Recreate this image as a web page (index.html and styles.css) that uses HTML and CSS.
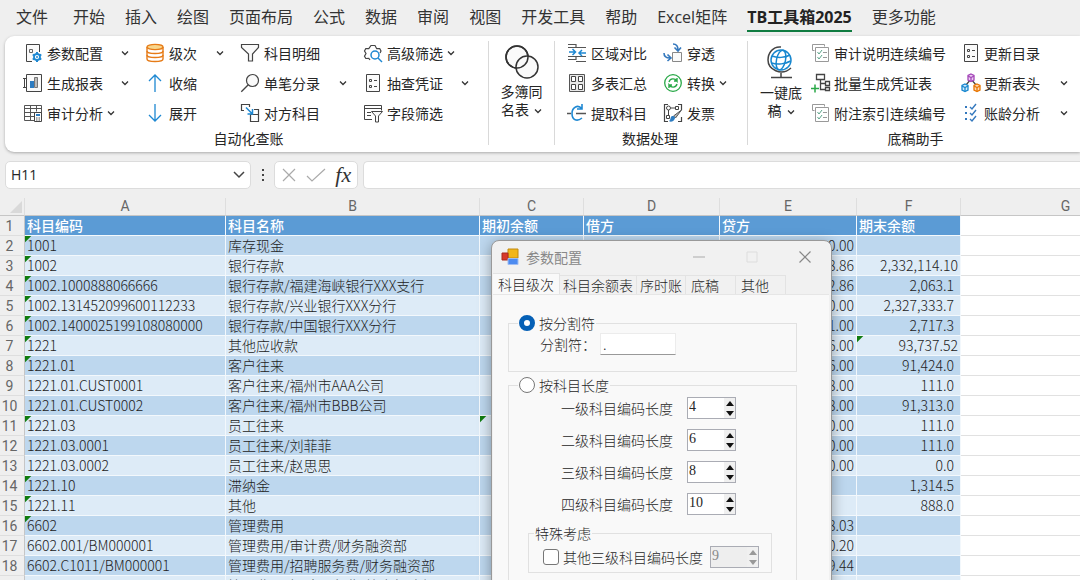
FILE: index.html
```
<!DOCTYPE html>
<html lang="zh-CN">
<head>
<meta charset="utf-8">
<title>TB工具箱2025</title>
<link rel="stylesheet" href="styles.css">
</head>
<body>
<svg class="defs" aria-hidden="true">
  <symbol id="chev" viewBox="0 0 8 8"><path d="M1 2.500 4 5.500 7 2.500" fill="none" stroke="#333" stroke-width="1.300"/></symbol>
  <symbol id="checklist" viewBox="0 0 20 20"><g fill="none" stroke="#999"><path d="M3.500 7.500h-2v-6h12v2"/><path d="M4.500 4.500h13v14h-13z" fill="#fff"/><path d="M12 9.500h4M12 14.500h4"/><path d="m6.500 9 1.500 2 3-4M6.500 14l1.500 2 3-4" stroke="#5ba58a"/></g></symbol>
  <symbol id="sheet" viewBox="0 0 20 20"><g fill="#fafafa" stroke="#444"><path d="M3.500 1.500h13v17h-13z"/><path d="M6.500 6.500h2v2h-2zM6.500 12.500h2v2h-2z"/><path d="M11 7.500h3M11 13.500h3"/></g></symbol>
</svg>
<div class="app">
  <nav class="menu">
    <a class="menu-item file" href="#">文件</a><a class="menu-item" href="#">开始</a><a class="menu-item" href="#">插入</a><a class="menu-item" href="#">绘图</a><a class="menu-item" href="#">页面布局</a><a class="menu-item" href="#">公式</a><a class="menu-item" href="#">数据</a><a class="menu-item" href="#">审阅</a><a class="menu-item" href="#">视图</a><a class="menu-item" href="#">开发工具</a><a class="menu-item" href="#">帮助</a><a class="menu-item" href="#">Excel矩阵</a><a class="menu-item active" href="#">TB工具箱2025</a><a class="menu-item" href="#">更多功能</a>
  </nav>

  <section class="ribbon">
    <div class="group audit">
      <div class="tools">
        <button class="tool"><svg class="icon" viewBox="0 0 20 20"><path d="M9 18.500H3.500v-17h13V9" fill="#fafafa" stroke="#444"/><path d="M6.500 6.500h3v3h-3z" fill="none" stroke="#666"/><circle cx="14" cy="14" r="3" fill="#fff" stroke="#1e88d2" stroke-width="1.800"/><path d="M14 9v2M14 17v2M9.700 11.500l1.700 1M16.600 15.500l1.700 1M9.700 16.500l1.700-1M16.600 12.500l1.700-1" stroke="#1e88d2" stroke-width="2"/><circle cx="14" cy="14" r="1" fill="#1e88d2"/></svg>参数配置<svg class="chev far"><use href="#chev"/></svg></button>
        <button class="tool"><svg class="icon" viewBox="0 0 20 20"><path d="M2 4v12c0 3.300 16 3.300 16 0V4" fill="#fff" stroke="#e67b17" stroke-width="1.400"/><path d="M2 8c0 3.300 16 3.300 16 0M2 12c0 3.300 16 3.300 16 0" fill="none" stroke="#e67b17" stroke-width="1.400"/><ellipse cx="10" cy="4" rx="8" ry="2.600" fill="#f8d68c" stroke="#e67b17" stroke-width="1.400"/></svg>级次<svg class="chev far"><use href="#chev"/></svg></button>
        <button class="tool"><svg class="icon" viewBox="0 0 20 20"><path d="M1.500 1.500h17v3l-6 6.500v7h-4v-7l-7-6.500z" fill="#fafafa" stroke="#444" stroke-width="1.200"/></svg>科目明细</button>
        <button class="tool"><svg class="icon" viewBox="0 0 20 20"><path d="M7 17 5.800 15.300l-3 .2-1.300-2.300L3 10.500 1.500 8l1.300-2.500 3 .2L8 2.500h4l1.700 3.200 3-.2L18 8l-1 2" fill="none" stroke="#444" stroke-width="1.200"/><circle cx="12" cy="12" r="4" fill="#fff" stroke="#1e88d2" stroke-width="1.500"/><path d="m15 15 4 4" stroke="#1e88d2" stroke-width="1.500"/></svg>高级筛选<svg class="chev"><use href="#chev"/></svg></button>

        <button class="tool"><svg class="icon" viewBox="0 0 20 20"><path d="M3.500 1.500h15v17h-15z" fill="#fafafa" stroke="#444"/><path d="M1.500 5v10M0 5.500h3M0 14.500h3" stroke="#444"/><path d="M7 8h4v7H7z" fill="#2d7cc1"/><path d="M11.500 4.500h3v10h-3z" fill="#bbb" stroke="#777"/></svg>生成报表<svg class="chev far"><use href="#chev"/></svg></button>
        <button class="tool"><svg class="icon" viewBox="0 0 20 20"><path d="M10 19V1.500M4 8l6-6 6 6" fill="none" stroke="#1e88d2" stroke-width="1.300"/></svg>收缩</button>
        <button class="tool"><svg class="icon" viewBox="0 0 20 20"><circle cx="12.500" cy="7.500" r="6" fill="#fafafa" stroke="#444" stroke-width="1.200"/><path d="m8.300 11.800-7 7" stroke="#444" stroke-width="1.300"/></svg>单笔分录<svg class="chev far"><use href="#chev"/></svg></button>
        <button class="tool"><svg class="icon"><use href="#sheet"/></svg>抽查凭证<svg class="chev far"><use href="#chev"/></svg></button>

        <button class="tool"><svg class="icon" viewBox="0 0 20 20"><path d="M1.500 2.500h17v15h-17zM1.500 5.500h17M1.500 9.500h17M1.500 13.500h10M7.500 2.500v15M13.500 2.500v6" fill="none" stroke="#555"/><path d="M11.500 9.500h7v9h-7z" fill="#fff" stroke="#444"/><path d="M13 11h4v2h-4z" fill="#2d7cc1"/><path d="M13 15h1.500M15.500 15H17M13 17h1.500M15.500 17H17" stroke="#555"/></svg>审计分析<svg class="chev"><use href="#chev"/></svg></button>
        <button class="tool"><svg class="icon" viewBox="0 0 20 20"><path d="M10 1v17.500M4 12l6 6 6-6" fill="none" stroke="#1e88d2" stroke-width="1.300"/></svg>展开</button>
        <button class="tool"><svg class="icon" viewBox="0 0 20 20"><path d="M4 7.500H1.500v-6h8V4M14 6.500h4.500v5M10.500 11.500h8v7h-8z" fill="none" stroke="#444" stroke-width="1.200"/><path d="m6 4.500 6 6M12.500 6v5H7.500" fill="none" stroke="#1e88d2" stroke-width="1.500"/></svg>对方科目</button>
        <button class="tool"><svg class="icon" viewBox="0 0 20 20"><path d="M9 16.500H1.500v-14h17v5M1.500 5.500h17M4 9.500h4M4 12.500h4" fill="none" stroke="#444"/><path d="M8.500 8.500h11l-4 4.500v6h-3v-6z" fill="#fafafa" stroke="#444"/></svg>字段筛选</button>
      </div>
      <div class="caption">自动化查账</div>
    </div>

    <div class="group books">
      <button class="big"><svg class="big-icon" viewBox="0 0 36 36"><circle cx="13" cy="13" r="11" fill="#fafafa" stroke="#333" stroke-width="1.500"/><circle cx="23" cy="23" r="11" fill="#fafafa" stroke="#333" stroke-width="1.500"/><circle cx="13" cy="13" r="11" fill="none" stroke="#333" stroke-width="1.500"/></svg><span>多簿同</span><span>名表<svg class="chev"><use href="#chev"/></svg></span></button>
    </div>

    <div class="group data">
      <div class="tools">
        <button class="tool"><svg class="icon" viewBox="0 0 20 20"><path d="M1 1.500h8v3h10M1 4.500h8M1 16.500h8v-3h10M9 18.500h10M1 13.500h8" fill="none" stroke="#555" stroke-width="1.200"/><path d="M2 9h6M5.500 6l3 3-3 3M19 10h-6M15 7l-3 3 3 3" fill="none" stroke="#1e88d2" stroke-width="1.500"/></svg>区域对比</button>
        <button class="tool"><svg class="icon" viewBox="0 0 20 20"><path d="M9.500 9.500h9v9h-9z" fill="#fafafa" stroke="#888"/><path d="M10 1c4 0 5 2 5 6M11.500 4.500 15 8l3-3.500M1 10c0 4 2 5 6 5M4.500 11.500 8 15l-3.500 3" fill="none" stroke="#3478bd" stroke-width="1.600"/></svg>穿透</button>
        <button class="tool"><svg class="icon" viewBox="0 0 20 20"><path d="M2.500 1.500h15v17h-15z" fill="#e8e8e8" stroke="#555"/><path d="M4.500 3.500h4v5h-4zM11.500 3.500h4v5h-4zM4.500 11.500h4v5h-4zM11.500 11.500h4v5h-4z" fill="#fff" stroke="#444"/></svg>多表汇总</button>
        <button class="tool"><svg class="icon" viewBox="0 0 20 20"><circle cx="10" cy="10" r="8.300" fill="#fff" stroke="#29a847" stroke-width="1.300"/><path d="M6 9c1-4 6-4 8-1V5M14 8h-3M14 11c-1 4-6 4-8 1v3M6 12h3" fill="none" stroke="#29a847" stroke-width="1.400"/></svg>转换<svg class="chev"><use href="#chev"/></svg></button>
        <button class="tool"><svg class="icon" viewBox="0 0 20 20"><path d="M0 10.500h4M9 10.500h10" stroke="#555" stroke-width="1.300"/><path d="M15 1v5h-5M15 6C11 1 5 4 5 10.500S10 19 15 15" fill="none" stroke="#1e88d2" stroke-width="1.600"/></svg>提取科目</button>
        <button class="tool"><svg class="icon" viewBox="0 0 20 20"><path d="M5 1.500H1.500v17H5M15 1.500h3.500V7M18.500 14v4.500H15" fill="none" stroke="#444" stroke-width="1.200"/><circle cx="5.500" cy="5" r="2" fill="none" stroke="#444"/><path d="M8 5h4M12.500 3.500h3v3h-3zM5.500 7v5M3.500 12.500h3v3h-3z" fill="none" stroke="#444"/><path d="m18.500 7-6 8-2-2z" fill="#bbb" stroke="#555"/><path d="M9 13c3 0 4 2 2 4-1 2-4 2-5 1 2-1 1-4 3-5z" fill="#2d7cc1"/></svg>发票</button>
      </div>
      <div class="caption">数据处理</div>
    </div>

    <div class="group draft">
      <button class="big"><svg class="big-icon" viewBox="0 0 36 36"><circle cx="18" cy="15" r="10" fill="#fff" stroke="#1787cf" stroke-width="1.500"/><ellipse cx="18" cy="15" rx="4.500" ry="10" fill="none" stroke="#1787cf" stroke-width="1.500" transform="rotate(12 18 15)"/><path d="M9 11c5 2 13 2 18-1M8.500 18c6 2 14 1 19-2" fill="none" stroke="#1787cf" stroke-width="1.500"/><path d="M18 2C10 1 5 8 5 15c0 9 13 17 23 8M18 28v4M8 32.500h21" fill="none" stroke="#444" stroke-width="1.500"/></svg><span>一键底</span><span>稿<svg class="chev"><use href="#chev"/></svg></span></button>
      <div class="draft-main">
        <div class="tools">
          <button class="tool"><svg class="icon"><use href="#checklist"/></svg>审计说明连续编号</button>
          <button class="tool"><svg class="icon"><use href="#sheet"/></svg>更新目录</button>
          <button class="tool"><svg class="icon" viewBox="0 0 20 20"><path d="M5.500 1.500h8v5h-8zM9.500 6.500v10H14M9.500 10.500H14M14.500 8.500h4v4h-4zM14.500 14.500h4v3h-4z" fill="none" stroke="#444" stroke-width="1.300"/><path d="M0 15.500h8M4 11.500v8" stroke="#29a847" stroke-width="1.500"/></svg>批量生成凭证表</button>
          <button class="tool"><svg class="icon" viewBox="0 0 20 20"><path d="m5 12 5-6 5 6" fill="none" stroke="#444" stroke-width="1.200"/><g stroke-width="1.300"><path d="m10 1 3 1.500V7l-3 1.500L7 7V2.500z" fill="#ecd0f2" stroke="#a445b8"/><path d="m7 3 3 1.500L13 3M10 4.500V8" fill="none" stroke="#a445b8"/><path d="m4 11 3 1.500V17l-3 1.500L1 17v-4.500z" fill="#d5ebfa" stroke="#1787cf"/><path d="m1 13 3 1.500L7 13M4 14.500V18" fill="none" stroke="#1787cf"/><path d="m16 11 3 1.500V17l-3 1.500-3-1.500v-4.500z" fill="#fbdcb8" stroke="#e87500"/><path d="m13 13 3 1.500 3-1.500M16 14.500V18" fill="none" stroke="#e87500"/></g></svg>更新表头<svg class="chev far"><use href="#chev"/></svg></button>
          <button class="tool"><svg class="icon"><use href="#checklist"/></svg>附注索引连续编号</button>
          <button class="tool"><svg class="icon" viewBox="0 0 20 20"><path d="M4 3h2v2H4zM4 9h2v2H4zM4 15h2v2H4z" fill="#3478bd"/><path d="m9 4 2 2 4-5M9 10l2 2 4-5M9 16l2 2 4-5" fill="none" stroke="#3478bd" stroke-width="1.400"/></svg>账龄分析<svg class="chev far"><use href="#chev"/></svg></button>
        </div>
        <div class="caption">底稿助手</div>
      </div>
    </div>
  </section>

  <div class="formula-bar">
    <div class="box name-box"><input class="name-input" aria-label="名称框" value="H11"><svg class="name-chev" viewBox="0 0 14 10"><path d="m2 2 5 5 5-5" fill="none" stroke="#444" stroke-width="1.500"/></svg></div>
    <svg class="dots" viewBox="0 0 4 14"><path d="M1 1h2v2H1zM1 6h2v2H1zM1 11h2v2H1z" fill="#444"/></svg>
    <div class="box fx-box">
      <button class="fx-btn" aria-label="取消"><svg viewBox="0 0 20 16"><path d="m4 2 12 12M16 2 4 14" stroke="#aaa" stroke-width="1.200"/></svg></button>
      <button class="fx-btn" aria-label="输入"><svg viewBox="0 0 20 16"><path d="m1 9 5 5L19 2" fill="none" stroke="#aaa" stroke-width="1.200"/></svg></button>
      <button class="fx-btn fx">fx</button>
    </div>
    <input class="box formula" aria-label="编辑栏">
  </div>

  <div class="grid-wrap">
    <table class="grid">
      <colgroup><col class="c0"><col class="ca"><col class="cb"><col class="cc"><col class="cd"><col class="ce"><col class="cf"><col class="cg"></colgroup>
      <thead><tr><th class="corner"><svg viewBox="0 0 12 12"><path d="M12 0v12H0z" fill="#d9d9d9"/></svg></th><th>A</th><th>B</th><th>C</th><th>D</th><th>E</th><th>F</th><th>G</th></tr></thead>
      <tbody>
        <tr class="title"><th>1</th><td>科目编码</td><td>科目名称</td><td>期初余额</td><td>借方</td><td>贷方</td><td>期末余额</td><td></td></tr>
        <tr><th>2</th><td class="flag">1001</td><td>库存现金</td><td></td><td></td><td>0.00</td><td></td><td></td></tr>
        <tr><th>3</th><td class="flag">1002</td><td>银行存款</td><td></td><td></td><td>8.86</td><td>2,332,114.10</td><td></td></tr>
        <tr><th>4</th><td class="flag">1002.1000888066666</td><td>银行存款/福建海峡银行XXX支行</td><td></td><td></td><td>2.86</td><td class="short">2,063.1</td><td></td></tr>
        <tr><th>5</th><td class="flag">1002.131452099600112233</td><td>银行存款/兴业银行XXX分行</td><td></td><td></td><td>0.00</td><td class="short">2,327,333.7</td><td></td></tr>
        <tr><th>6</th><td class="flag">1002.1400025199108080000</td><td>银行存款/中国银行XXX分行</td><td></td><td></td><td>1.00</td><td class="short">2,717.3</td><td></td></tr>
        <tr><th>7</th><td class="flag">1221</td><td>其他应收款</td><td></td><td></td><td>6.00</td><td class="flag">93,737.52</td><td></td></tr>
        <tr><th>8</th><td class="flag">1221.01</td><td>客户往来</td><td></td><td></td><td>6.00</td><td class="short">91,424.0</td><td></td></tr>
        <tr><th>9</th><td>1221.01.CUST0001</td><td>客户往来/福州市AAA公司</td><td></td><td></td><td>8.00</td><td class="short">111.0</td><td></td></tr>
        <tr><th>10</th><td>1221.01.CUST0002</td><td>客户往来/福州市BBB公司</td><td></td><td></td><td>8.00</td><td class="short">91,313.0</td><td></td></tr>
        <tr><th>11</th><td class="flag">1221.03</td><td>员工往来</td><td class="flag"></td><td></td><td>0.00</td><td class="short">111.0</td><td></td></tr>
        <tr><th>12</th><td>1221.03.0001</td><td>员工往来/刘菲菲</td><td></td><td></td><td>0.00</td><td class="short">111.0</td><td></td></tr>
        <tr><th>13</th><td>1221.03.0002</td><td>员工往来/赵思思</td><td></td><td></td><td>0.00</td><td class="short">0.0</td><td></td></tr>
        <tr><th>14</th><td class="flag">1221.10</td><td>滞纳金</td><td></td><td></td><td></td><td class="short">1,314.5</td><td></td></tr>
        <tr><th>15</th><td class="flag">1221.11</td><td>其他</td><td></td><td></td><td></td><td class="short">888.0</td><td></td></tr>
        <tr><th>16</th><td class="flag">6602</td><td>管理费用</td><td></td><td></td><td>8.03</td><td></td><td></td></tr>
        <tr><th>17</th><td>6602.001/BM000001</td><td>管理费用/审计费/财务融资部</td><td></td><td></td><td>0.20</td><td></td><td></td></tr>
        <tr><th>18</th><td>6602.C1011/BM000001</td><td>管理费用/招聘服务费/财务融资部</td><td></td><td></td><td>9.44</td><td></td><td></td></tr>
        <tr><th></th><td></td><td>管理费用/招聘服务费/综合行政部</td><td></td><td></td><td></td><td></td><td></td></tr>
      </tbody>
    </table>
  </div>

  <div class="dialog" role="dialog" aria-label="参数配置">
    <header class="dialog-bar">
      <svg class="dialog-icon" viewBox="0 0 18 18"><path d="M7 1h10v9H7z" fill="#f1b61b" stroke="#c28a10"/><path d="M1 5h6v7H1z" fill="#d8392b" stroke="#a82a20"/><path d="M7 10.500h10v6H7z" fill="#4d8bf0" stroke="#9fbdf3"/></svg>
      <span class="dialog-title">参数配置</span>
      <button class="win" aria-label="最小化"><svg viewBox="0 0 14 14"><path d="M1 7h12" stroke="#bbb" stroke-width="1.300"/></svg></button>
      <button class="win" aria-label="最大化"><svg viewBox="0 0 14 14"><path d="M2 2h10v10H2z" fill="none" stroke="#ddd"/></svg></button>
      <button class="win" aria-label="关闭"><svg viewBox="0 0 14 14"><path d="m1.500 1.500 11 11M12.500 1.500l-11 11" stroke="#888" stroke-width="1.200"/></svg></button>
    </header>
    <div class="tabs" role="tablist">
      <button class="tab on" role="tab">科目级次</button><button class="tab" role="tab">科目余额表</button><button class="tab" role="tab">序时账</button><button class="tab wide" role="tab">底稿</button><button class="tab wide" role="tab">其他</button>
    </div>
    <div class="panel">
      <fieldset class="frame split">
        <legend><label class="choice"><input type="radio" name="mode" checked>按分割符</label></legend>
        <div class="split-row"><label for="sep">分割符：</label><input id="sep" class="sep" value="."></div>
      </fieldset>
      <fieldset class="frame lengths">
        <legend><label class="choice"><input type="radio" name="mode">按科目长度</label></legend>
        <div class="len-row"><label for="l1">一级科目编码长度</label><span class="spin"><input id="l1" value="4"><button class="up" aria-label="增加"></button><button class="down" aria-label="减少"></button></span></div>
        <div class="len-row"><label for="l2">二级科目编码长度</label><span class="spin"><input id="l2" value="6"><button class="up" aria-label="增加"></button><button class="down" aria-label="减少"></button></span></div>
        <div class="len-row"><label for="l3">三级科目编码长度</label><span class="spin"><input id="l3" value="8"><button class="up" aria-label="增加"></button><button class="down" aria-label="减少"></button></span></div>
        <div class="len-row"><label for="l4">四级科目编码长度</label><span class="spin"><input id="l4" value="10"><button class="up" aria-label="增加"></button><button class="down" aria-label="减少"></button></span></div>
        <fieldset class="frame special">
          <legend>特殊考虑</legend>
          <div class="special-row"><label class="choice"><input type="checkbox">其他三级科目编码长度</label><span class="spin off"><input aria-label="其他三级科目编码长度值" value="9" disabled><button class="up" aria-label="增加" disabled></button><button class="down" aria-label="减少" disabled></button></span></div>
        </fieldset>
      </fieldset>
    </div>
  </div>
</div>
</body>
</html>
```
FILE: styles.css
```
* { box-sizing: border-box; }
body { margin: 0; background: #efefef; color: #262626; font: 14px/20px "Noto Sans CJK SC", "Noto Sans", sans-serif; }
button, input { font: inherit; color: inherit; margin: 0; padding: 0; border: 0; background: none; }
.defs { display: none; }
.app { position: relative; height: 100vh; overflow: hidden; display: flex; flex-direction: column; }

.menu { display: flex; flex: none; gap: 20px; height: 36px; padding: 4px 16px; font: 16px/26px "Open Sans", "Noto Sans CJK SC", sans-serif; white-space: nowrap; }
.menu-item { height: 28px; color: #333; text-decoration: none; }
.menu-item.file { margin-right: 5px; }
.menu-item.active { font-weight: 700; color: #222; border-bottom: 2px solid #107c41; }

.ribbon { display: flex; flex: none; margin-left: 5px; height: 116px; padding: 3px 0; background: #fff; border-radius: 9px 0 0 9px; box-shadow: 0 1px 3px #aaa; }
.group { flex: none; border-right: 1px solid #d9d9d9; margin: 2px 0 4px; }
.group:last-child { border: 0; }
.tools { display: grid; grid-auto-rows: 30px; margin-top: -3px; }
.tool { display: flex; align-items: center; gap: 4px; text-align: left; white-space: nowrap; }
.icon { width: 20px; height: 20px; flex: none; }
.chev { width: 8px; height: 8px; flex: none; }
.chev.far { margin-left: auto; margin-right: 16px; }
.caption { padding-right: 14px; text-align: center; white-space: nowrap; }
.big { display: flex; flex-direction: column; align-items: center; line-height: 18px; white-space: nowrap; }
.big-icon { width: 36px; height: 36px; margin-bottom: 2px; }
.big .chev { margin-left: 5px; }
.audit { width: 484px; padding-left: 18px; }
.audit .tools { grid-template-columns: 122px 95px 123px 122px; }
.books { width: 66px; padding: 3px 0 0; display: flex; justify-content: center; align-items: flex-start; }
.data { width: 193px; padding-left: 12px; }
.data .tools { grid-template-columns: 96px 84px; }
.draft { display: flex; align-items: flex-start; padding-left: 10px; }
.draft .big { width: 46px; padding-top: 4px; margin-right: 7px; }
.draft .tools { grid-template-columns: 150px 123px; }
.draft .tool { gap: 3px; }
.draft .chev.far { margin-right: 16px; }
.draft .caption { padding-right: 64px; }

.formula-bar { display: flex; flex: none; align-items: center; height: 28px; margin: 9px 0 0 5px; }
.box { height: 28px; background: #fff; border: 1px solid #dcdcdc; border-radius: 5px; }
.name-box { display: flex; align-items: center; width: 246px; padding: 0 4px 0 5px; }
.name-input { flex: 1; min-width: 0; font-family: "Open Sans", sans-serif; }
.name-chev { width: 14px; height: 10px; }
.dots { width: 4px; height: 14px; margin: 0 9px 0 10px; }
.fx-box { display: flex; align-items: center; justify-content: space-around; width: 84px; margin-right: 5px; }
.fx-btn { width: 20px; }
.fx-btn svg { display: block; width: 20px; height: 16px; }
.fx { font: italic 400 22px/24px "Liberation Serif", serif; color: #333; }
.formula { flex: 1; min-width: 0; border-right: 0; border-radius: 5px 0 0 5px; }

.grid-wrap { flex: 1; min-height: 0; margin-top: 9px; overflow: hidden; background: #fff; }
.grid { width: 1171px; table-layout: fixed; border-collapse: separate; border-spacing: 0; }
.c0 { width: 25px; } .ca { width: 201px; } .cb { width: 254px; } .cc { width: 104px; } .cd { width: 136px; } .ce { width: 137px; } .cf { width: 104px; } .cg { width: 210px; }
.grid th { padding: 0; font-family: Roboto, sans-serif; font-weight: 400; color: #666; background: #efefef; border-right: 1px solid #dedede; }
.grid thead th { height: 18px; line-height: 17px; border-bottom: 1px solid #c6c6c6; }
.corner svg { display: block; width: 12px; height: 12px; margin-left: 10px; }
.grid tbody th { height: 20px; padding: 1px 5px 0 0; line-height: 18px; border-right-color: #c6c6c6; border-bottom: 1px solid #dedede; }
.grid td { height: 20px; padding: 0 2px; line-height: 19px; color: #222; font-weight: 300; white-space: nowrap; border-right: 1px solid #f3f8fc; border-bottom: 1px solid #f3f8fc; background: #ddebf7; }
.grid tr:nth-child(even) td { background: #bdd7ee; }
.grid tr.title td { background: #5b9bd5; color: #fff; font-weight: 500; }
.grid td:nth-child(6), .grid td:nth-child(7) { text-align: right; }
.grid tr.title td:nth-child(n) { text-align: left; }
.grid td.short { padding-right: 6px; }
.grid tbody tr td.flag { background-image: linear-gradient(135deg, #107c10 4px, transparent 5px); }
.grid tr td:last-child, .grid tr:nth-child(even) td:last-child { background: #fff; border-color: #e1e1e1; }

.dialog { position: absolute; left: 491px; top: 240px; width: 341px; height: 420px; background: #f1f1f1; border: 1px solid #999; border-radius: 8px; box-shadow: 0 3px 14px rgba(0, 0, 0, .35); font-weight: 300; overflow: hidden; }
.dialog-bar { display: flex; align-items: center; height: 32px; padding: 0 19px 0 9px; }
.dialog-icon { width: 18px; height: 18px; }
.dialog-title { flex: 1; margin-left: 7px; color: #888; font-weight: 400; }
.win { width: 14px; height: 14px; margin-left: 39px; }
.win svg { display: block; width: 14px; height: 14px; }
.tabs { display: flex; align-items: flex-end; height: 21px; padding-left: 1px; white-space: nowrap; }
.tab { height: 19px; padding: 0 3px; line-height: 18px; border: 1px solid #e3e3e3; border-left: 0; border-bottom: 0; }
.tab.on { height: 21px; padding: 0 5px; background: #f9f9f9; }
.tab.wide { padding: 0 16px 0 5px; }
.panel { height: 380px; margin: 0 2px 0 1px; padding: 18px 32px 0 15px; background: #f9f9f9; border-top: 1px solid #e6e6e6; }
.frame { min-width: 0; margin: 0; border: 1px solid #e1e1e1; }
.frame legend { height: 20px; padding: 0 1px; }
.choice { display: flex; align-items: center; gap: 4px; }
.choice input { appearance: none; width: 16px; height: 16px; border: 1px solid #777; background: #fff; }
.choice input[type="radio"] { border-radius: 50%; }
.choice input[type="radio"]:checked { border: 5px solid #0560b6; }
.choice input[type="checkbox"] { border-radius: 3px; }
.split { height: 59px; padding: 0 4px 0 9px; }
.split-row { display: flex; align-items: center; gap: 4px; padding-left: 22px; }
.sep { width: 76px; height: 22px; padding: 0 2px; background: #fff; border: 1px solid #ececec; border-bottom-color: #999; }
.lengths { height: 240px; margin-top: 3px; padding: 2px 24px 0 9px; }
.len-row { display: flex; align-items: center; justify-content: space-between; height: 22px; margin: 0 36px 10px 43px; }
.spin { display: grid; grid-template-columns: 1fr 11px; grid-template-rows: 10px 10px; width: 49px; height: 22px; background: #fff; border: 1px solid #aaacb4; font-family: "Liberation Serif", serif; }
.spin input { grid-row: span 2; min-width: 0; padding: 0 1px; line-height: 17px; height: 17px; }
.spin button { display: flex; align-items: center; justify-content: center; background: #f0f0f0; color: #111; }
.spin button::before { content: ""; border: 4px solid transparent; }
.spin .up::before { border-top: 0; border-bottom: 5px solid currentColor; }
.spin .down::before { border-bottom: 0; border-top: 5px solid currentColor; }
.spin.off { background: #eee; color: #888; }
.spin.off button { color: #999; }
.special { height: 50px; margin: -2px 0 0 10px; padding: 2px 12px 0 5px; }
.special-row { display: flex; align-items: center; justify-content: space-between; height: 24px; padding-left: 9px; white-space: nowrap; }
```
